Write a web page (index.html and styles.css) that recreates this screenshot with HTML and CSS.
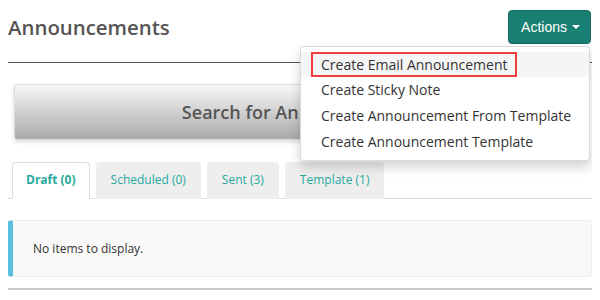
FILE: index.html
```html
<!DOCTYPE html>
<html>
<head>
    <meta name="viewport" content="width=device-width, initial-scale=1.0">
    <link rel="stylesheet" href="styles.css">
</head>
<body>
    <div class="page">
        <div class="page-header">
            <h1 class="page-title">Announcements</h1>
            <div class="actions">
                <button class="btn-actions">Actions <span class="caret"></span></button>
                <ul class="dropdown-menu">
                    <li class="active"><span class="marked">Create Email Announcement</span></li>
                    <li>Create Sticky Note</li>
                    <li>Create Announcement From Template</li>
                    <li>Create Announcement Template</li>
                </ul>
            </div>
        </div>
        <div class="header-rule"></div>

        <div class="search-bar">Search for Announcements</div>

        <ul class="tabs">
            <li class="tab current">Draft (0)</li>
            <li class="tab">Scheduled (0)</li>
            <li class="tab">Sent (3)</li>
            <li class="tab">Template (1)</li>
        </ul>

        <div class="alert-info">No items to display.</div>
        <div class="footer-rule"></div>
    </div>
</body>
</html>
```

FILE: styles.css
```css
* {
    margin: 0;
    padding: 0;
    box-sizing: border-box;
}

body {
    margin: 8px;
    font-family: "Open Sans", sans-serif;
    color: #333;
    background: #fff;
}

.page-header {
    display: flex;
    justify-content: space-between;
    align-items: center;
    padding-top: 2px;
    padding-right: 1px;
}

.page-title {
    font-size: 20.4px;
    font-weight: 600;
    color: #555;
    line-height: 34px;
}

.actions {
    position: relative;
}

.btn-actions {
    display: flex;
    align-items: center;
    gap: 5px;
    height: 34px;
    padding: 0 10px 0 12px;
    background: #1a7f73;
    border: 1px solid #156b61;
    border-radius: 4px;
    color: #fff;
    font-family: "Liberation Sans", Arial, sans-serif;
    font-size: 14px;
}

.caret {
    width: 0;
    height: 0;
    border-left: 4px solid transparent;
    border-right: 4px solid transparent;
    border-top: 4px solid #fff;
}

.dropdown-menu {
    position: absolute;
    top: 36px;
    right: 1px;
    width: 290px;
    list-style: none;
    background: #fff;
    border: 1px solid rgba(0, 0, 0, 0.15);
    border-radius: 4px;
    box-shadow: 0 6px 12px rgba(0, 0, 0, 0.18);
    padding: 5px 0;
    z-index: 5;
}

.dropdown-menu li {
    font-size: 14px;
    line-height: 20px;
    padding: 3px 20px;
    color: #333;
    white-space: nowrap;
}

.dropdown-menu li.active {
    background: #f5f5f5;
    padding-top: 0;
    padding-bottom: 0;
}

.marked {
    display: inline-block;
    margin-left: -10px;
    padding: 0 8px;
    line-height: 21px;
    border: 2px solid #ef3c3f;
}

.header-rule {
    margin-top: 18px;
    border-top: 1px solid #555;
}

.search-bar {
    margin: 21px 6px 0;
    height: 56px;
    display: flex;
    align-items: center;
    justify-content: center;
    border-radius: 3px;
    border: 1px solid #ddd;
    background: linear-gradient(#f8f8f8, #a9a9a9);
    box-shadow: 0 2px 4px rgba(0, 0, 0, 0.15);
    font-size: 18px;
    font-weight: 600;
    color: #555;
}

.tabs {
    display: flex;
    gap: 6px;
    list-style: none;
    margin-top: 22px;
    padding-left: 4px;
    border-bottom: 1px solid #ddd;
}

.tab {
    height: 37px;
    line-height: 34px;
    padding: 0 14px;
    font-size: 12px;
    color: #27a9a1;
    background: #eee;
    border: 1px solid transparent;
    border-radius: 4px 4px 0 0;
    margin-bottom: -1px;
}

.tab.current {
    padding: 0 13px;
    background: #fff;
    border-color: #ddd;
    border-bottom-color: #fff;
    font-weight: 700;
}

.alert-info {
    margin-top: 21px;
    height: 57px;
    display: flex;
    align-items: center;
    padding-left: 20px;
    background: #f9f9f9;
    border: 1px solid #eee;
    border-left: 5px solid #5bc0de;
    border-radius: 3px;
    font-size: 12px;
    color: #333;
}

.footer-rule {
    margin-top: 11px;
    border-top: 2px solid #ccc;
}
```
